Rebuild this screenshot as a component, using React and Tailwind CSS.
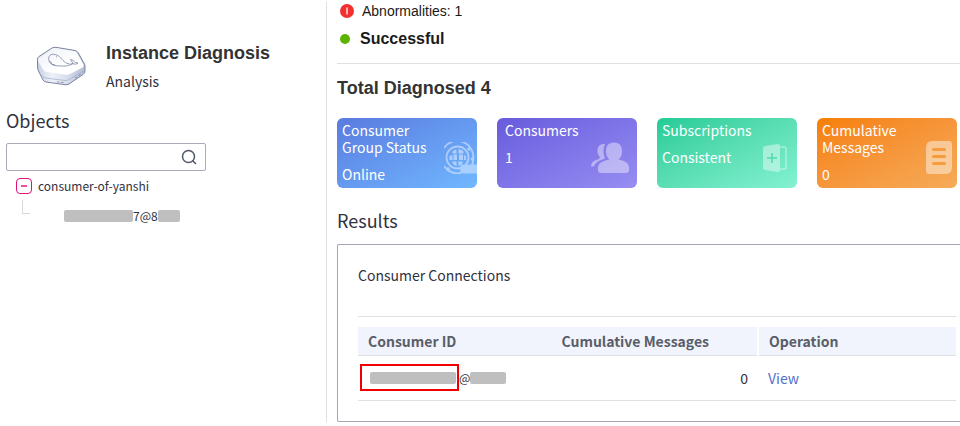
import React from "react";

function WhaleIcon() {
  return (
    <svg className="h-10 w-[50px] shrink-0" viewBox="0 0 50 40" fill="none" aria-hidden="true">
      <defs>
        <linearGradient id="side" x1="0" y1="0" x2="1" y2="0">
          <stop offset="0" stopColor="#c9d0e4" />
          <stop offset="0.3" stopColor="#eef1f9" />
          <stop offset="0.65" stopColor="#d6dcec" />
          <stop offset="1" stopColor="#b3bcd4" />
        </linearGradient>
        <linearGradient id="top" x1="0" y1="0" x2="1" y2="1">
          <stop offset="0" stopColor="#eceff8" />
          <stop offset="0.6" stopColor="#ffffff" />
        </linearGradient>
      </defs>
      <path d="M1.500 14Q1 12 3 10.500L16 2Q18 1 20 1.300L39 4.500Q41 5 42 6.500L48.500 18Q49 19 49 20V25Q49 27 47 28.500L33 38Q31 39 29 38.700L10 36Q8 35.500 7 34L2.500 25Q1.500 23 1.500 21Z" fill="url(#side)" stroke="#7e869e" strokeWidth="1" />
      <path d="M2 14Q2 12 4 11L16.500 3Q18 2 20 2.300L38.500 5.300Q40 5.500 41 7L47.500 18.500Q48.500 20 46.500 21.500L34 28Q32 29 30 28.700L11 26Q8.500 25.500 7.500 24L2.500 16Z" fill="url(#top)" />
      <path d="M6 29.500Q7.500 31.500 10 32L29 34.500Q31.500 34.500 33 33.500L48.500 24.500" stroke="#a2abc5" strokeWidth="0.7" />
      <path d="M21 36h2.500M25 36.500h2.500M39 32l2-1M42.500 29.500l2-1" stroke="#8d97b5" strokeWidth="1.100" />
      <path d="M17 19C12 17 11 10 15.500 8.500C21 7.500 24 11 27 14.500C30 17.500 34 19 37 17.500L34.500 13.500C37 14 38 15 39 16.500L42 17C40 18.500 38.500 18.500 37 17.500C34 19.500 31 20 28 20C23 20 20 20 17 19M13 15L15 16L16 18.500L18.500 18.500L19.500 20M20 10.500l1 .5" stroke="#8a91ad" strokeWidth="0.9" strokeLinejoin="round" />
    </svg>
  );
}

function GlobeIcon() {
  return (
    <svg className="h-8 w-[33px]" viewBox="0 0 33 32" fill="none" aria-hidden="true">
      <g opacity="0.45">
        <circle cx="13.500" cy="15.500" r="11" stroke="#fff" strokeWidth="1.800" />
        <path d="M13.500 7Q10 7 8.500 9.500V11.500H12.500V7ZM14.500 7Q18 7 19.500 9.500V11.500H14.500ZM5.500 13.500H8.500V18H5.500ZM9.500 12.500H13V18H9.500ZM15 12.500H19V18H15ZM20 13.500H22V18H20ZM8.500 19.500H12.500V24Q9 23 8.500 21ZM14.500 19.500H18.500V21Q18 23 14.500 24Z" fill="#fff" />
        <path d="M17 31A16 16 0 0 1 0 24M0 6A16 16 0 0 1 29 18Q29 21 28 23" stroke="#fff" strokeWidth="1.800" />
        <circle cx="25" cy="7" r="1.800" fill="#fff" />
        <circle cx="28.500" cy="17" r="1.800" fill="#fff" />
        <circle cx="4" cy="27" r="1.800" fill="#fff" />
      </g>
      <path d="M33 22.500H19q-3 0-3 4.500t3 4.500h14Z" fill="#a9cfff" />
    </svg>
  );
}

function PeopleIcon() {
  return (
    <svg className="h-8 w-[38px]" viewBox="0 0 38 32" fill="#fff" fillOpacity="0.42" aria-hidden="true">
      <path d="M23 0.500C17 0.500 15 4 15 9.500Q15 15 18.500 17.500Q7 19.500 7 25V28Q7 31 10 31H35Q38 31 38 28V25Q38 19.500 27.500 17.500Q31 15 31 9.500C31 4 29 0.500 23 0.500Z" />
      <path d="M14 2Q7 1 6.500 8Q6 12 9 15L8 17Q0 19 0 24Q1 25 3 24Q5 19 13 17L14 16Q11 10 14 2Z" />
    </svg>
  );
}

function SubscriptionIcon() {
  return (
    <svg className="h-[30px] w-6" viewBox="0 0 24 30" fill="none" aria-hidden="true">
      <path d="M0 5Q0 3.500 2 3L15 1Q17 1 17 3V27Q17 29 15 29L2 27Q0 26.500 0 25Z" fill="#fff" fillOpacity="0.42" />
      <path d="M9 10V20M4 15H14" stroke="#4edcb0" strokeWidth="1.600" />
      <path d="M17 4H21Q23 4 23 6V24Q23 26 21 26H17" stroke="#fff" strokeOpacity="0.42" strokeWidth="1.500" />
    </svg>
  );
}

function DocumentIcon() {
  return (
    <svg className="h-[33px] w-[26px]" viewBox="0 0 26 33" aria-hidden="true">
      <path d="M6 0H23Q26 0 26 3V26Q26 33 20 33H3Q0 33 0 30V7Q0 0 6 0Z" fill="#fff" fillOpacity="0.45" />
      <path d="M7.500 8.500H18.500M7.500 15.500H18.500M7.500 22.500H18.500" stroke="#f59c3c" strokeWidth="3" strokeLinecap="round" />
    </svg>
  );
}

function StatCard({ title, value, look, icon, iconPlace }) {
  return (
    <article className={`relative h-[70px] overflow-hidden rounded-md py-1 text-sm leading-[17px] text-white ${look}`}>
      <h3 className="w-24">{title}</h3>
      <p className="mt-2.5">{value}</p>
      <div className={`absolute ${iconPlace}`}>{icon}</div>
    </article>
  );
}

function Redacted({ size }) {
  return <span className={`inline-block h-3 rounded-xs bg-[#bfbfbf] ${size}`} />;
}

export default function App() {
  return (
    <div className="flex overflow-hidden bg-white pt-0.5 font-['Noto_Sans_CJK_SC','Noto_Sans',sans-serif] text-[#30323e]">
      <aside className="w-[326px] shrink-0 pt-10 pl-1.5">
        <header className="flex items-center gap-5 pl-[30px]">
          <WhaleIcon />
          <div>
            <h1 className="font-['Liberation_Sans',Arial,sans-serif] text-lg leading-[22px] font-bold text-[#333]">Instance Diagnosis</h1>
            <p className="mt-2 text-sm leading-[18px]">Analysis</p>
          </div>
        </header>
        <h2 className="mt-[18px] text-lg leading-6">
          <label htmlFor="object-search">Objects</label>
        </h2>
        <div className="mt-[11px] flex h-7 w-[200px] items-center rounded-xs border border-[#aaaab8]">
          <input id="object-search" type="text" className="h-full min-w-0 flex-1 px-2 text-sm outline-none" />
          <button type="button" aria-label="Search" className="mr-2">
            <svg className="size-4" viewBox="0 0 16 16" fill="none" stroke="#505866" strokeWidth="1.500" aria-hidden="true">
              <circle cx="7.500" cy="7.500" r="6" />
              <path d="M11.500 11.500L15 15" />
            </svg>
          </button>
        </div>
        <ul className="mt-[7px] text-xs leading-4">
          <li>
            <div className="flex items-center gap-1.5 pl-2.5">
              <button type="button" aria-label="Collapse" className="flex size-4 items-center justify-center rounded border border-[#e0107c]">
                <span className="h-0.5 w-1.5 bg-[#ec4f9d]" />
              </button>
              <span>consumer-of-yanshi</span>
            </div>
            <ul className="mt-1.5 pl-4">
              <li className="flex h-[22px] items-end">
                <span className="mr-[34px] mb-2 h-3.5 w-2 border-b border-l border-[#d7d8de]" />
                <Redacted size="w-[69px]" />
                <span className="leading-3">7@8</span>
                <Redacted size="w-[22px]" />
              </li>
            </ul>
          </li>
        </ul>
      </aside>

      <main className="min-w-0 flex-1 border-l border-[#dfe0e3] pl-2.5">
        <div className="font-['Liberation_Sans',Arial,sans-serif] text-[#1a1a1a]">
          <p className="flex h-[18px] items-center gap-2 pl-[3px] text-sm">
            <svg className="size-3.5" viewBox="0 0 14 14" aria-hidden="true">
              <circle cx="7" cy="7" r="7" fill="#f23030" />
              <path d="M7 3.500V10.500" stroke="#fff" strokeOpacity="0.85" strokeWidth="1.500" />
            </svg>
            Abnormalities: 1
          </p>
          <p className="mt-[7px] flex h-6 items-center gap-2.5 pl-[3px] text-base font-bold">
            <span className="size-2.5 rounded-full bg-[#5cb300]" />
            Successful
          </p>
        </div>
        <section className="mt-3 border-t border-[#dfe0e3] pt-[13px]">
          <h2 className="font-['Liberation_Sans',Arial,sans-serif] text-lg leading-[22px] font-bold text-[#333]">Total Diagnosed 4</h2>
          <div className="mt-[19px] mr-[3px] grid grid-cols-4 gap-5">
            <StatCard title="Consumer Group Status" value="Online" look="bg-linear-to-br from-[#5a7bdf] to-[#71b7ff] px-[5px]" icon={<GlobeIcon />} iconPlace="right-0 bottom-3.5" />
            <StatCard title="Consumers" value="1" look="bg-linear-to-br from-[#695bdd] to-[#978df2] px-2" icon={<PeopleIcon />} iconPlace="right-2 bottom-3.5" />
            <StatCard title="Subscriptions" value="Consistent" look="bg-linear-to-br from-[#20cb97] to-[#83f2d2] px-[5px]" icon={<SubscriptionIcon />} iconPlace="right-2.5 bottom-[15px]" />
            <StatCard title="Cumulative Messages" value="0" look="bg-linear-to-br from-[#f67f00] to-[#f5ab57] px-[5px]" icon={<DocumentIcon />} iconPlace="right-[5px] bottom-3.5" />
          </div>
        </section>
        <section className="mt-5">
          <h2 className="text-lg leading-6">Results</h2>
          <div className="mt-3 rounded-l-xs border border-r-0 border-[#a6a6b2] pt-5 pr-1 pb-5 pl-5 text-sm">
            <h3 className="leading-5">Consumer Connections</h3>
            <div className="mt-[31px] border-t border-[#dfe0e3] pt-2.5">
              <table className="w-full table-fixed border-collapse leading-5">
                <thead className="bg-[#f1f4fc] text-[#5a5e68]">
                  <tr className="h-7 border-b border-[#dfe0e3]">
                    <th className="w-1/3 pl-2.5 text-left font-bold">Consumer ID</th>
                    <th className="w-1/3 border-r-2 border-white pr-12 text-right font-bold">Cumulative Messages</th>
                    <th className="w-[33%] pl-2.5 text-left font-bold">Operation</th>
                  </tr>
                </thead>
                <tbody>
                  <tr className="h-[45px] border-b border-[#dfe0e3]">
                    <td className="pl-0.5">
                      <div className="flex items-center">
                        <span className="flex h-[27px] w-[99px] shrink-0 items-center border-2 border-[#f20000] pl-2">
                          <Redacted size="w-[86px]" />
                        </span>
                        <span className="text-xs">@</span>
                        <Redacted size="w-9" />
                      </div>
                    </td>
                    <td className="pr-2.5 text-right">0</td>
                    <td className="pl-2.5">
                      <a href="#view" className="text-[#526ecc]">View</a>
                    </td>
                  </tr>
                </tbody>
              </table>
            </div>
          </div>
        </section>
      </main>
    </div>
  );
}
